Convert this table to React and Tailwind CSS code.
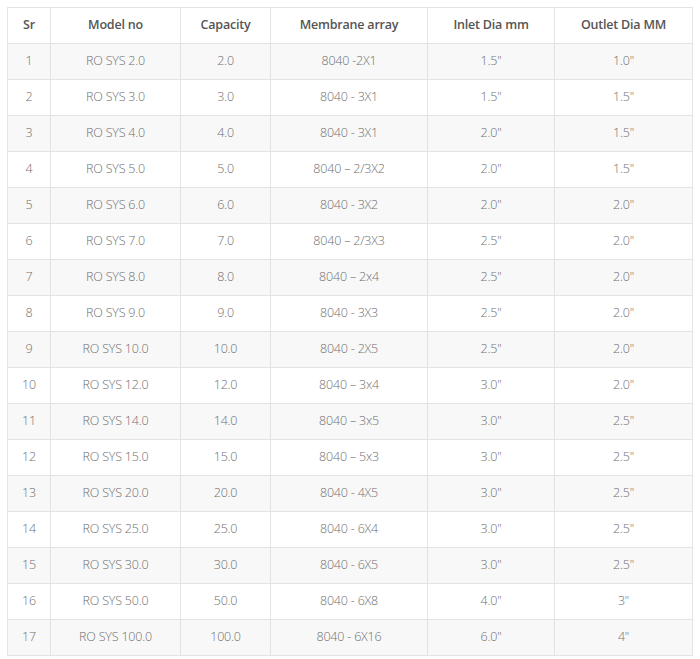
import React from 'react';

const rows = [
  ['1', 'RO SYS 2.0', '2.0', '8040 -2X1', '1.5"', '1.0"'],
  ['2', 'RO SYS 3.0', '3.0', '8040 - 3X1', '1.5"', '1.5"'],
  ['3', 'RO SYS 4.0', '4.0', '8040 - 3X1', '2.0"', '1.5"'],
  ['4', 'RO SYS 5.0', '5.0', '8040 – 2/3X2', '2.0"', '1.5"'],
  ['5', 'RO SYS 6.0', '6.0', '8040 - 3X2', '2.0"', '2.0"'],
  ['6', 'RO SYS 7.0', '7.0', '8040 – 2/3X3', '2.5"', '2.0"'],
  ['7', 'RO SYS 8.0', '8.0', '8040 – 2x4', '2.5"', '2.0"'],
  ['8', 'RO SYS 9.0', '9.0', '8040 - 3X3', '2.5"', '2.0"'],
  ['9', 'RO SYS 10.0', '10.0', '8040 - 2X5', '2.5"', '2.0"'],
  ['10', 'RO SYS 12.0', '12.0', '8040 – 3x4', '3.0"', '2.0"'],
  ['11', 'RO SYS 14.0', '14.0', '8040 – 3x5', '3.0"', '2.5"'],
  ['12', 'RO SYS 15.0', '15.0', '8040 – 5x3', '3.0"', '2.5"'],
  ['13', 'RO SYS 20.0', '20.0', '8040 - 4X5', '3.0"', '2.5"'],
  ['14', 'RO SYS 25.0', '25.0', '8040 - 6X4', '3.0"', '2.5"'],
  ['15', 'RO SYS 30.0', '30.0', '8040 - 6X5', '3.0"', '2.5"'],
  ['16', 'RO SYS 50.0', '50.0', '8040 - 6X8', '4.0"', '3"'],
  ['17', 'RO SYS 100.0', '100.0', '8040 - 6X16', '6.0"', '4"'],
];

const headers = ['Sr', 'Model no', 'Capacity', 'Membrane array', 'Inlet Dia mm', 'Outlet Dia MM'];
const widths = ['w-[43px]', 'w-[130px]', 'w-[90px]', 'w-[157px]', 'w-[127px]', 'w-[138px]'];

export default function App() {
  return (
    <div className="min-h-screen bg-white p-[7px] font-['Open_Sans',sans-serif]">
      <table className="w-[686px] table-fixed border-collapse text-center text-[12.5px] tracking-[-0.2px]">
        <thead>
          <tr className="h-[36px] bg-white">
            {headers.map((h, i) => (
              <th key={h} className={`${widths[i]} border border-[#e3e3e3] font-semibold text-[#555]`}>
                {h}
              </th>
            ))}
          </tr>
        </thead>
        <tbody>
          {rows.map((r, i) => (
            <tr key={r[0]} className={`h-[36px] ${i % 2 === 0 ? 'bg-[#f8f8f8]' : 'bg-white'}`}>
              {r.map((c, j) => (
                <td key={j} className="border border-[#e3e3e3] font-light text-[#6f6f6f]">
                  {c}
                </td>
              ))}
            </tr>
          ))}
        </tbody>
      </table>
    </div>
  );
}
